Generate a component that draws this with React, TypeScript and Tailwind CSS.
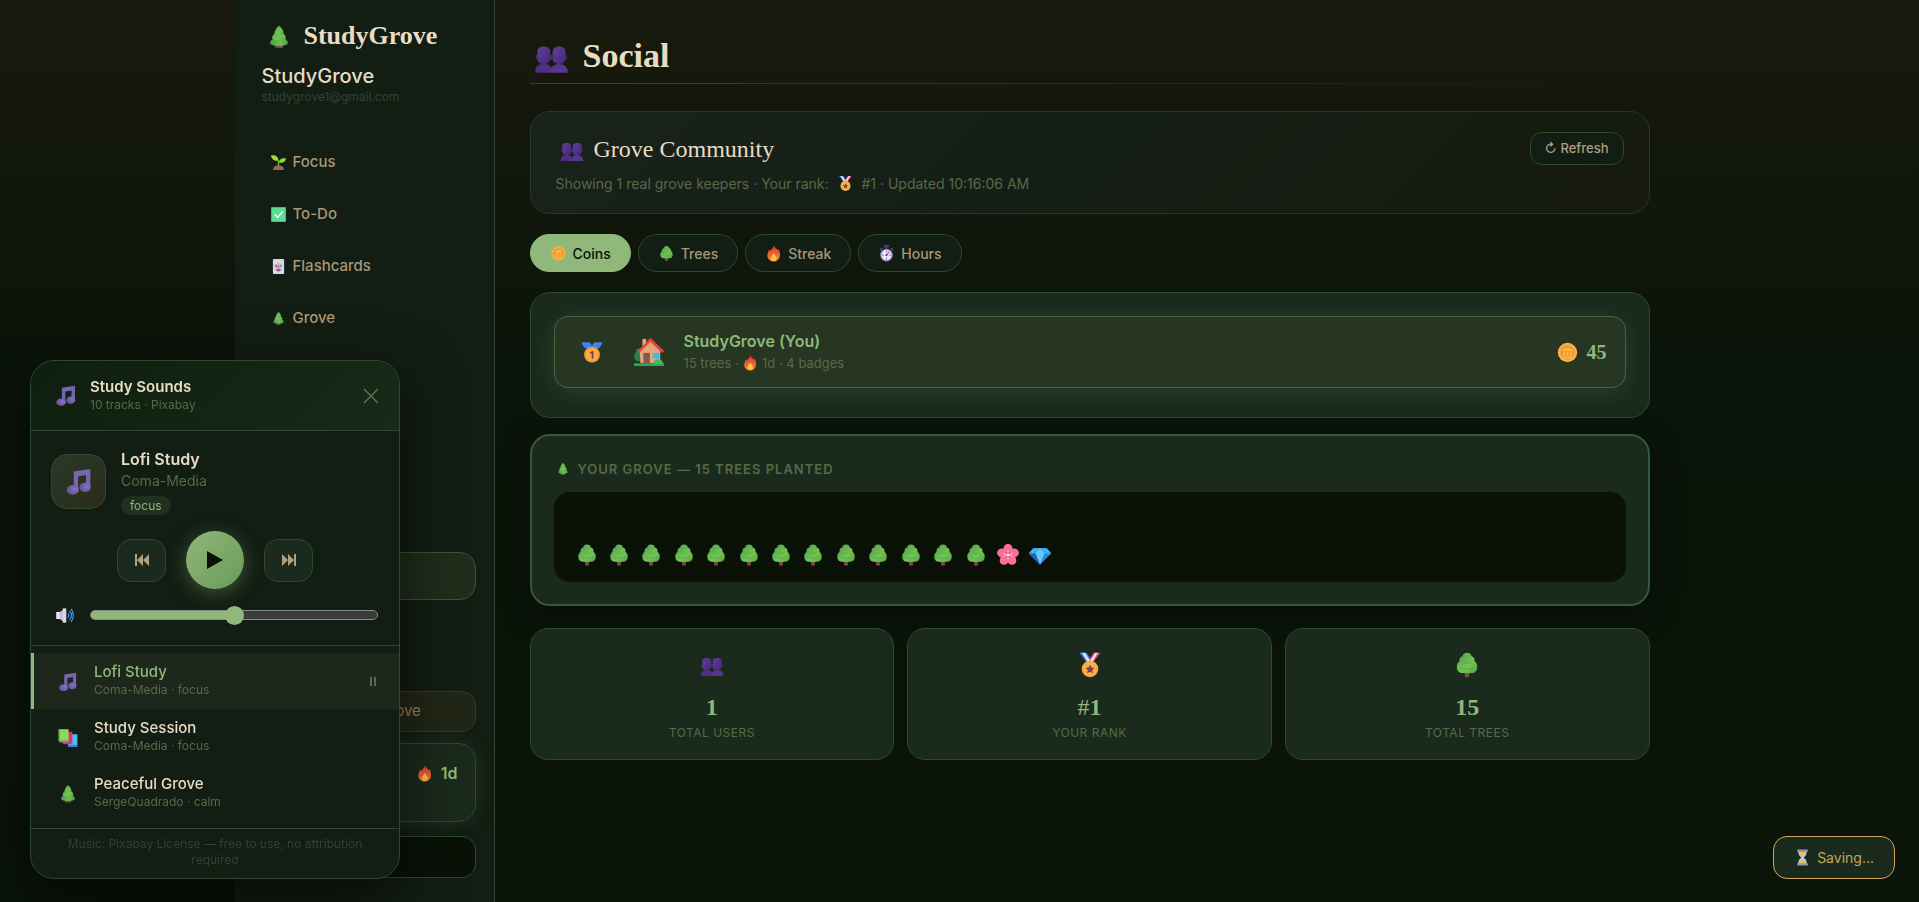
import { useState } from "react"

const emoji = {
  pine: (
    <>
      <path d="M11 25h10v4c-2 1-8 1-10 0z" fill="#7d4453" />
      <path d="M16 14c5 2 11 6 11 9 0 3-5 4-11 4S5 26 5 23c0-3 6-7 11-9z" fill="url(#leaf)" />
      <path d="M16 8c4 2 8.500 6 8.500 8.500S21 20 16 20s-8.500-1-8.500-3.500S12 10 16 8z" fill="url(#leafLight)" />
      <path d="M16 2c2 1 5.500 6 5.500 8.500S19 13.500 16 13.500s-5.500-.5-5.500-3S14 3 16 2z" fill="url(#leafLight)" />
    </>
  ),
  tree: (
    <>
      <path d="M13.500 23h5v7h-5z" fill="#7d4a53" />
      <path
        d="M16 2c3 0 5 1.500 5 4 2.500.5 4 2.500 3.600 5.500C27 13.500 28 16 27.600 19c-.2 4-3 6-6 6-3 .6-8 .6-11 0-3 0-6-2-6.200-6-.4-3 .8-5.500 3-7.500C7 8.500 8.500 6.500 11 6c0-2.500 2-4 5-4z"
        fill="url(#leafLight)"
      />
      <path d="M12 13c3 1.500 6 1.500 9 0M9 19c4 2 10 2 14 0" stroke="#56a548" strokeWidth="1.300" fill="none" opacity=".6" />
    </>
  ),
  people: (
    <>
      <path d="M1 28c0-5 2-8 8-8s8 3 8 8z" fill="#4f2f86" />
      <path d="M15 28c0-5 3-8 8-8s8 3 8 8z" fill="#57368f" />
      <rect x="3" y="4" width="12" height="16" rx="5" fill="url(#violet)" />
      <rect x="17" y="4" width="12" height="16" rx="5" fill="url(#violet)" />
      <path d="M2 12h1v4H2zM15 12h2v4h-2zM29 12h1v4h-1z" fill="#4f2f86" />
    </>
  ),
  medal: (
    <>
      <path d="M4 2h8l6 9-5 3z" fill="#3f8fe8" />
      <path d="M28 2h-8l-6 9 5 3z" fill="#f0386b" />
      <path d="M7 2h3l6 9-3 1zM25 2h-3l-6 9 3 1z" fill="#e8e4f4" />
      <circle cx="16" cy="20.500" r="9.500" fill="#f5a83c" />
      <circle cx="16" cy="20.500" r="7.500" fill="#fbb245" />
      <path d="m16 15.500 1.600 3.300 3.600.5-2.600 2.500.6 3.600-3.200-1.700-3.200 1.700.6-3.600-2.600-2.500 3.600-.5z" fill="#7c3f52" />
    </>
  ),
  first: (
    <>
      <path d="M2 3h9c3 0 4 3 5 5 1-2 2-5 5-5h9c-1 5-4 8-8 9l-6 2-6-2C6 11 3 8 2 3z" fill="#3f82f0" />
      <circle cx="16" cy="19.500" r="10.500" fill="#f59c38" />
      <circle cx="16" cy="19.500" r="8" fill="#ffab40" />
      <path d="M13 16.500 16 14.500h2V25h-2.500v-7.500l-2.500.8z" fill="#7c3f52" />
    </>
  ),
  coin: (
    <>
      <circle cx="16" cy="16" r="13.500" fill="#fbb23d" />
      <circle cx="16" cy="16" r="10" fill="#ee9639" />
      <path d="M9 13c1-4 13-4 14 0v1H9zM10 15h2.500v6H10zM14.700 15h2.600v6h-2.600zM19.500 15H22v6h-2.500zM9 22h14v2H9z" fill="#fcbc48" />
    </>
  ),
  fire: (
    <>
      <path d="M17 1c1 4 5 5 7 9 1-1 1-2 1-3 3 5 4 10 3 14-1 6-6 10-11.500 10S5 27 4.500 21C4 15 7 13 7 9l2.500 2.500C12 7 16 6 17 1z" fill="url(#flame)" />
      <path d="M16.500 14c0 3 5.500 6 5.500 10.500 0 3-2.500 5.500-5.500 5.500S11 27.500 11 24.500c0-4 4-5 5.500-10.500z" fill="#fbc53c" />
    </>
  ),
  watch: (
    <>
      <path d="M11 0h10v4h-3v4h-4V4h-3z" fill="#4a3a78" />
      <path d="M4 9l4-3M28 9l-4-3" stroke="#5a4a8c" strokeWidth="3" />
      <circle cx="16" cy="19" r="12" fill="#8d86b4" />
      <circle cx="16" cy="19" r="9.500" fill="#ece8f6" />
      <path d="M16 19l5-6" stroke="#e83a5f" strokeWidth="2" />
      <path d="M16 11v3M16 24v3M8 19h3M21 19h3" stroke="#5a4a8c" strokeWidth="1.500" />
      <circle cx="16" cy="19" r="2" fill="#4a3a78" />
    </>
  ),
  seedling: (
    <>
      <path d="M14.500 11h3v13h-3z" fill="#6fb53a" />
      <path d="M0 1c7-2 15 0 16 11C8 14 1 9 0 1z" fill="#a4dc3c" />
      <path d="M32 7c-7-1-14 0-15 9 8 2 14-1 15-9z" fill="#8fdb34" />
      <path d="M4 32c1-7 6-10 12-10s11 3 12 10z" fill="#9c655d" />
    </>
  ),
  check: (
    <>
      <rect width="32" height="32" rx="2" fill="#45bd7c" />
      <rect x="2" y="2" width="28" height="28" rx="2" fill="#5edb95" />
      <path d="m8 16 6 6 11-12" stroke="#fff" strokeWidth="3" fill="none" />
    </>
  ),
  joker: (
    <>
      <rect x="4" y="0" width="24" height="32" rx="2" fill="#dcd6ec" />
      <path d="M8 13c3-3 5-1 6 2l2-6 2 6c1-3 3-5 6-2l-2 5H10z" fill="#58a7ec" />
      <path d="M8 13c3-3 5-1 6 2l-2 3h-2z" fill="#ee4f9a" />
      <circle cx="16" cy="9" r="2.500" fill="#f6c63f" />
      <circle cx="16" cy="19" r="4" fill="#f29a63" />
      <path d="M10 22h12l-3 4h-6z" fill="#7c4fc0" />
    </>
  ),
  notes: (
    <>
      <path d="M10 4 29 1v21h-5V8l-9 1.600V25h-5z" fill="#7765ae" />
      <ellipse cx="9" cy="25" rx="7" ry="5.500" fill="url(#note)" />
      <ellipse cx="23" cy="22" rx="6.500" ry="5.500" fill="url(#note)" />
    </>
  ),
  books: (
    <>
      <path d="M16 10h15v20H16z" fill="#3fc0f4" />
      <path d="M16 27h15v3H16z" fill="#5a6fd0" />
      <path d="M8 6h15v18l-3 2H8z" fill="#e5316b" />
      <path d="M1 2h16v19H1z" fill="#86da5c" />
      <path d="M1 20h16l-1 3H3z" fill="#8f7fb8" />
      <path d="M1 2h2v19H1z" fill="#4fae53" />
    </>
  ),
  flower: (
    <>
      <g fill="#fb6f96">
        <ellipse cx="16" cy="8" rx="6" ry="7" />
        <ellipse cx="16" cy="8" rx="6" ry="7" transform="rotate(72 16 16)" />
        <ellipse cx="16" cy="8" rx="6" ry="7" transform="rotate(144 16 16)" />
        <ellipse cx="16" cy="8" rx="6" ry="7" transform="rotate(216 16 16)" />
        <ellipse cx="16" cy="8" rx="6" ry="7" transform="rotate(288 16 16)" />
      </g>
      <circle cx="16" cy="16" r="4" fill="#e0447c" />
      <path d="M16 10v12M10 14l12 4M22 14l-12 4" stroke="#ffd7e2" strokeWidth="1.300" />
    </>
  ),
  gem: (
    <>
      <path d="M7 7h18l6 7-15 15L1 14z" fill="#2a86dc" />
      <path d="M7 7h18l6 7H1z" fill="#35b8f2" />
      <path d="m10 14 6-7 6 7-6 15z" fill="#6cc4f8" />
      <path d="M1 14h9l6 15z" fill="#2263c4" />
    </>
  ),
  speaker: (
    <>
      <path d="M2 10h8v12H2z" fill="#e8e2f0" />
      <path d="M8 10l9-6v24l-9-6z" fill="#c4bcd2" />
      <path d="M13 4h6v24h-6z" fill="#ddd6e8" />
      <path d="M21 12c3 2 3 6 0 8M24 8c5 4 5 12 0 16M27 5c5 6 5 16 0 22" stroke="#3a9cf0" strokeWidth="2" fill="none" />
    </>
  ),
  hourglass: (
    <>
      <path d="M8 4h16c0 6-2 9-6 12 4 3 6 6 6 12H8c0-6 2-9 6-12-4-3-6-6-6-12z" fill="#a9d5f4" />
      <path d="M10 6h12c-1 4-3 6-6 9-3-3-5-5-6-9zM16 18l7 9H9z" fill="#f8b84a" />
      <path d="M6 1h20v4H6zM6 27h20v4H6z" fill="#9b93ae" />
    </>
  ),
  house: (
    <>
      <circle cx="6" cy="16" r="4" fill="#2c7f43" />
      <circle cx="5" cy="21" r="5" fill="#278245" />
      <path d="M9 2h4v9H9z" fill="#d9a888" />
      <path d="M6 15 17 4l11 11v13H7z" fill="#e2a67a" />
      <path d="M4 15 17.500 1 32 15l-1.500 2L17.500 5 5.500 17z" fill="#e8453f" />
      <path d="M10 17h7v11h-7z" fill="#8c5650" />
      <path d="M20 17h7v6h-7z" fill="#3fb8f4" />
      <path d="M0 28h32v3H0z" fill="#2fa35a" />
      <path d="M20 29c1-4 4-6 7-5 3 0 4 3 4 5z" fill="#3fbf62" />
    </>
  ),
}

type EmojiName = keyof typeof emoji

function Emoji({ name, className = "size-5" }: { name: EmojiName; className?: string }) {
  return (
    <svg viewBox="0 0 32 32" className={`shrink-0 ${className}`} aria-hidden="true">
      {emoji[name]}
    </svg>
  )
}

// Gradients shared by every emoji drawing
function EmojiDefs() {
  return (
    <svg width="0" height="0" className="absolute" aria-hidden="true">
      <defs>
        <linearGradient id="leaf" x1="0" x2="1" y1="0" y2="0">
          <stop offset="0" stopColor="#4c9a50" />
          <stop offset=".6" stopColor="#6cc04f" />
          <stop offset="1" stopColor="#4c9c4c" />
        </linearGradient>
        <linearGradient id="leafLight" x1="0" x2="1" y1="0" y2="1">
          <stop offset="0" stopColor="#4f9c54" />
          <stop offset=".6" stopColor="#72c452" />
          <stop offset="1" stopColor="#58a548" />
        </linearGradient>
        <linearGradient id="violet" x1="0" x2="1" y1="0" y2="1">
          <stop offset="0" stopColor="#61409a" />
          <stop offset="1" stopColor="#432775" />
        </linearGradient>
        <radialGradient id="note" cx=".65" cy=".4">
          <stop offset="0" stopColor="#8672cc" />
          <stop offset="1" stopColor="#6a5a9e" />
        </radialGradient>
        <linearGradient id="flame" x1="0" x2="0" y1="0" y2="1">
          <stop offset="0" stopColor="#e0343c" />
          <stop offset="1" stopColor="#f9862f" />
        </linearGradient>
      </defs>
    </svg>
  )
}

const navItems: { icon: EmojiName; label: string }[] = [
  { icon: "seedling", label: "Focus" },
  { icon: "check", label: "To-Do" },
  { icon: "joker", label: "Flashcards" },
  { icon: "pine", label: "Grove" },
]

const tabs: { icon: EmojiName; label: string }[] = [
  { icon: "coin", label: "Coins" },
  { icon: "tree", label: "Trees" },
  { icon: "fire", label: "Streak" },
  { icon: "watch", label: "Hours" },
]

const tracks: { icon: EmojiName; title: string; meta: string }[] = [
  { icon: "notes", title: "Lofi Study", meta: "Coma-Media · focus" },
  { icon: "books", title: "Study Session", meta: "Coma-Media · focus" },
  { icon: "pine", title: "Peaceful Grove", meta: "SergeQuadrado · calm" },
]

const grove: EmojiName[] = [...Array<EmojiName>(13).fill("tree"), "flower", "gem"]

function Sidebar() {
  return (
    <aside className="flex w-[260px] shrink-0 flex-col border-r border-[#2d4a2d] bg-[#121d13] px-[18px] pb-6">
      <div className="flex h-[70px] items-center gap-3 pl-[13px]">
        <Emoji name="pine" className="mt-1 size-[26px]" />
        <span className="font-['Liberation_Serif',serif] text-[26px] font-bold text-[#e8dcc4]">StudyGrove</span>
      </div>
      <div className="-mt-[6px] pl-[9px]">
        <p className="text-xl leading-6 font-medium text-[#e8dcc4]">StudyGrove</p>
        <p className="text-[12px] leading-[18px] text-[#2d4530]">studygrove1@gmail.com</p>
      </div>
      <nav className="mt-[30px] flex flex-col">
        {navItems.map((item) => (
          <a key={item.label} href="#" className="flex h-[52px] items-center gap-[7px] pl-[18px] text-[15px] font-medium text-[#a89878]">
            <Emoji name={item.icon} className="size-[15px]" />
            {item.label}
          </a>
        ))}
      </nav>

      <div className="mt-auto flex flex-col">
        <div className="h-12 rounded-2xl border border-[#3a5734] bg-[#1f2d1b]" />
        <button className="mt-[91px] h-[41px] rounded-[14px] border border-[#3a3822] bg-[#222616] text-[15px] text-[#a08450]">
          Share My Grove
        </button>
        <div className="mt-[11px] flex h-[79px] items-start justify-end gap-2 rounded-[18px] border border-[#2d4a2d] bg-[#1a2a1c] px-[17px] pt-[17px] text-base font-semibold text-[#8fb87a] shadow-[0_0_20px_rgba(143,184,122,0.15)]">
          <Emoji name="fire" className="mt-1 size-[17px]" />
          1d
        </div>
        <div className="mt-[14px] h-[42px] rounded-[14px] border border-[#2d4a2d] bg-[#0a1208]" />
      </div>
    </aside>
  )
}

function Leaderboard() {
  return (
    <section className="mt-5 rounded-[20px] border border-[#2d4a2d] bg-[#1a2a1c] px-[23px] pt-[23px] pb-[29px]">
      <div className="flex h-[72px] items-center rounded-[14px] border border-[#4a6640] bg-[#263623] pr-[18px] pl-[25px] shadow-[0_4px_24px_rgba(143,184,122,0.15)]">
        <Emoji name="first" className="size-6" />
        <Emoji name="house" className="ml-[30px] size-[30px]" />
        <div className="ml-5">
          <h3 className="text-[16px] leading-[22px] font-semibold text-[#8fb87a]">StudyGrove (You)</h3>
          <p className="flex items-center text-[13px] leading-[22px] text-[#566b46]">
            15 trees ·&nbsp;
            <Emoji name="fire" className="size-4" />
            &nbsp;1d · 4 badges
          </p>
        </div>
        <div className="ml-auto flex items-center gap-2 font-['Liberation_Serif',serif] text-xl font-bold text-[#8fb87a]">
          <Emoji name="coin" className="size-[23px]" />
          45
        </div>
      </div>
    </section>
  )
}

function GrovePanel() {
  return (
    <section className="mt-4 rounded-[20px] border-2 border-[#35573a] bg-[#1a2a1c] px-[22px] pt-[22px] pb-[22px] shadow-[0_8px_32px_rgba(0,0,0,0.4)]">
      <h3 className="flex items-center gap-2 pl-[2px] text-[13px] leading-[22px] font-semibold tracking-[1px] text-[#566b46] uppercase">
        <Emoji name="pine" className="size-[14px]" />
        Your Grove — 15 Trees Planted
      </h3>
      <div className="mt-3 flex h-[90px] items-end rounded-2xl bg-[#0a1208] px-[21px] pb-[15px]">
        <div className="flex w-full max-w-[478px] justify-between">
          {grove.map((item, i) => (
            <Emoji key={i} name={item} className="size-6" />
          ))}
        </div>
      </div>
    </section>
  )
}

function StatCard({ icon, value, prefix, label }: { icon: EmojiName; value: string; prefix?: string; label: string }) {
  return (
    <div className="flex flex-1 flex-col items-center rounded-[18px] border border-[#2d4a2d] bg-[#1a2a1c] pt-[22px] pb-4 text-center">
      <Emoji name={icon} className={icon === "people" ? "mt-1 size-6" : "size-7"} />
      <p className="mt-[14px] font-['Liberation_Serif',serif] text-2xl leading-7 font-bold text-[#8fb87a]">
        {prefix && <span className="font-normal">{prefix}</span>}
        {value}
      </p>
      <p className="mt-[2px] text-[12px] leading-5 tracking-[0.5px] text-[#566b46] uppercase">{label}</p>
    </div>
  )
}

function Player() {
  const [volume, setVolume] = useState(50)
  const [active, setActive] = useState(0)

  return (
    <section
      aria-label="Study Sounds"
      className="fixed bottom-[23px] left-[30px] w-[370px] overflow-hidden rounded-3xl border border-[#2d4a2d] bg-[#121d13] shadow-[0_20px_60px_rgba(0,0,0,0.6)]"
    >
      <header className="flex h-[70px] items-center border-b border-[#2d4a2d] bg-linear-135 from-[#0f1f0f] to-[#1a2a18] pr-[20px] pl-6">
        <Emoji name="notes" className="size-[22px]" />
        <div className="ml-[13px]">
          <h2 className="text-[15px] leading-[18px] font-semibold text-[#e8dcc4]">Study Sounds</h2>
          <p className="text-xs leading-[18px] text-[#566b46]">10 tracks · Pixabay</p>
        </div>
        <button aria-label="Close" className="ml-auto text-[#6b7a56]">
          <svg viewBox="0 0 16 16" className="size-4" stroke="currentColor" strokeWidth="1.200" fill="none">
            <path d="M1 1l14 14M15 1 1 15" />
          </svg>
        </button>
      </header>

      <div className="px-5 pt-[17px] pb-[20px]">
        <div className="flex items-center gap-[15px]">
          <div className="flex size-[55px] items-center justify-center rounded-2xl border border-[#34472f] bg-linear-135 from-[#263b27] to-[#2b2a1a]">
            <Emoji name="notes" className="size-[28px]" />
          </div>
          <div>
            <h3 className="text-[16px] leading-[22px] font-semibold text-[#e8dcc4]">Lofi Study</h3>
            <p className="text-[14px] leading-[22px] text-[#566b46]">Coma-Media</p>
            <span className="mt-1 flex h-[19px] w-fit items-center rounded-full bg-[#213020] px-[9px] text-xs text-[#8fb87a]">focus</span>
          </div>
        </div>

        <div className="mt-4 flex items-center justify-center gap-5">
          <button aria-label="Previous track" className="flex h-[43px] w-[49px] items-center justify-center rounded-[14px] border border-[#2d4a2d] bg-[#1a2a1c]">
            <svg viewBox="0 0 14 12" className="h-3 w-[14px]" fill="#b0a080">
              <path d="M0 0h2v12H0zM8 0v12L2 6zM14 0v12L8 6z" />
            </svg>
          </button>
          <button
            aria-label="Play"
            className="flex size-[58px] items-center justify-center rounded-full bg-linear-135 from-[#8fb87a] to-[#6a9a58] shadow-[0_4px_20px_rgba(143,184,122,0.35)]"
          >
            <svg viewBox="0 0 16 18" className="h-[18px] w-4" fill="#0a1208">
              <path d="M0 0l16 9-16 9z" />
            </svg>
          </button>
          <button aria-label="Next track" className="flex h-[43px] w-[49px] items-center justify-center rounded-[14px] border border-[#2d4a2d] bg-[#1a2a1c]">
            <svg viewBox="0 0 14 12" className="h-3 w-[14px]" fill="#b0a080">
              <path d="M12 0h2v12h-2zM0 0l6 6-6 6zM6 0l6 6-6 6z" />
            </svg>
          </button>
        </div>

        <div className="mt-4 flex h-5 items-center gap-4 pr-[1px] pl-[4px]">
          <Emoji name="speaker" className="size-[19px]" />
          <input
            type="range"
            aria-label="Volume"
            value={volume}
            onChange={(e) => setVolume(Number(e.target.value))}
            className="h-[10px] min-w-0 flex-1 appearance-none rounded-full border border-[#8a8a8a] [&::-webkit-slider-thumb]:size-[19px] [&::-webkit-slider-thumb]:appearance-none [&::-webkit-slider-thumb]:rounded-full [&::-webkit-slider-thumb]:bg-[#8fb87a]"
            style={{ background: `linear-gradient(90deg, #8fb87a ${volume}%, #3b3b3b ${volume}%)` }}
          />
        </div>
      </div>

      <ul className="border-t border-[#2d4a2d] py-[7px]">
        {tracks.map((track, i) => (
          <li key={track.title}>
            <button
              onClick={() => setActive(i)}
              className={`flex h-14 w-full items-center border-l-3 pr-[23px] pl-6 text-left ${
                active === i ? "border-[#8fb87a] bg-[#1d271b]" : "border-transparent"
              }`}
            >
              <Emoji name={track.icon} className="mt-[2px] size-5" />
              <span className="ml-4 flex flex-col">
                <span className={`text-[15px] leading-[18px] font-medium ${active === i ? "text-[#8fb87a]" : "text-[#e8dcc4]"}`}>
                  {track.title}
                </span>
                <span className="text-xs leading-[18px] text-[#566b46]">{track.meta}</span>
              </span>
              {active === i && (
                <svg viewBox="0 0 6 9" className="ml-auto h-[9px] w-[6px]" fill="#566b46">
                  <path d="M0 0h2v9H0zM4 0h2v9H4z" />
                </svg>
              )}
            </button>
          </li>
        ))}
      </ul>

      <footer className="border-t border-[#2d4a2d] px-8 pt-[7px] pb-[10px] text-center text-xs leading-4 text-[#2d4530]">
        Music: Pixabay License — free to use, no attribution required
      </footer>
    </section>
  )
}

export default function App() {
  const [tab, setTab] = useState("Coins")

  return (
    <div className="min-h-screen bg-[#0a1409] bg-linear-to-b from-[#181a0c] via-[#0b140a] via-40% to-[#0a1409] font-['Inter',sans-serif]">
      <EmojiDefs />
      <div className="mx-auto flex min-h-screen max-w-[1450px]">
        <Sidebar />
        <main className="min-w-0 flex-1 px-[35px] pt-[27px]">
          <h1 className="flex h-[56px] items-center gap-[14px] pl-1 font-['Liberation_Serif',serif] text-[34px] font-bold text-[#e8dcc4]">
            <Emoji name="people" className="mt-2 size-[35px]" />
            Social
          </h1>
          <div className="h-px bg-linear-to-r from-[#2d4a2d] to-transparent" />

          <section className="mt-[27px] flex items-start justify-between rounded-[20px] border border-[#25382f] bg-linear-135 from-[#19221b] via-[#151f17] via-40% to-[#171a0e] px-[25px] pt-[18px] pb-[17px]">
            <div>
              <h2 className="flex h-[38px] items-center gap-[10px] pl-1 font-['Liberation_Serif',serif] text-2xl text-[#e8dcc4]">
                <Emoji name="people" className="mt-[5px] size-6" />
                Grove Community
              </h2>
              <p className="mt-[3px] flex h-[25px] items-center text-[14px] text-[#566b46]">
                Showing 1 real grove keepers · Your rank:&nbsp;
                <Emoji name="medal" className="mr-1 ml-1 size-[17px]" />
                &nbsp;#1 · Updated 10:16:06 AM
              </p>
            </div>
            <button className="mt-[2px] h-[33px] rounded-xl border border-[#2d4a2d] bg-[#121d13] px-[14px] text-[13px] font-medium text-[#b0a080]">
              ↻ Refresh
            </button>
          </section>

          <div className="mt-5 flex gap-[7px]">
            {tabs.map((item) => (
              <button
                key={item.label}
                onClick={() => setTab(item.label)}
                className={`flex h-[38px] items-center gap-[6px] rounded-full border px-[19px] text-[14px] font-medium ${
                  tab === item.label ? "border-[#8fb87a] bg-[#8fb87a] text-[#0a1208]" : "border-[#2d4a2d] bg-[#121d13] text-[#a89878]"
                }`}
              >
                <Emoji name={item.icon} className="size-[17px]" />
                {item.label}
              </button>
            ))}
          </div>

          <Leaderboard />
          <GrovePanel />

          <div className="mt-[22px] flex gap-[13px]">
            <StatCard icon="people" value="1" label="Total Users" />
            <StatCard icon="medal" prefix="#" value="1" label="Your Rank" />
            <StatCard icon="tree" value="15" label="Total Trees" />
          </div>
        </main>
      </div>

      <Player />

      <div
        role="status"
        className="fixed right-6 bottom-[23px] flex h-[43px] items-center gap-[6px] rounded-[14px] border border-[#d4a85c] bg-[#1a2a1c] px-[20px] text-[14px] text-[#c9a45c]"
      >
        <Emoji name="hourglass" className="size-[17px]" />
        Saving...
      </div>
    </div>
  )
}
